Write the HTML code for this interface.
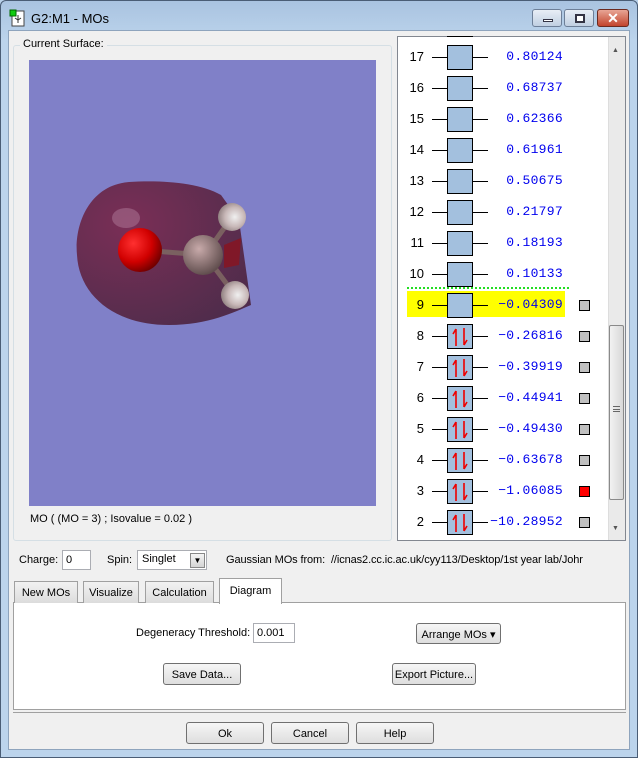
<!DOCTYPE html>
<html><head><meta charset="utf-8"><style>
*{margin:0;padding:0;box-sizing:border-box}
body{width:638px;height:758px;overflow:hidden;background:#b9d1ea;font-family:"Liberation Sans",sans-serif;font-size:11px;color:#000;position:relative}
.a{position:absolute;white-space:nowrap}
.frame{left:0;top:0;width:638px;height:758px;background:linear-gradient(#a9c3e0,#bcd4ec 40px,#bcd4ec);border:1px solid #4a5d75;border-radius:6px 6px 0 0}
.client{left:8px;top:30px;width:622px;height:720px;background:#f0f0f0;border:1px solid #8ea4bd}
.btn{position:absolute;white-space:nowrap;background:linear-gradient(#f6f6f6,#dedede);border:1px solid #707070;border-radius:3px;text-align:center;font-size:11px}
.num{position:absolute;width:20px;text-align:right;font-family:"Liberation Sans",sans-serif;font-size:13px}
.ln{position:absolute;height:1px;background:#000}
.box{position:absolute;width:26px;height:25px;background:#a3c0de;border:1px solid #000}
.en{position:absolute;right:75px;font-family:"Liberation Mono",monospace;font-size:13px;color:#0000ee;letter-spacing:0.3px}
.sq{position:absolute;left:579px;width:11px;height:11px;background:#c0c0c0;border:1px solid #000}
.tab{position:absolute;top:581px;height:22px;border:1px solid #a0a0a0;border-bottom:none;background:linear-gradient(#f2f2f2,#dcdcdc);font-size:11px;padding-top:5px;text-align:center}
</style></head><body>
<div class="a frame"></div>
<svg class="a" style="left:9px;top:9px" width="18" height="18"><rect x="3" y="2" width="12" height="15" fill="#fff" stroke="#444"/><rect x="1" y="1" width="6" height="6" fill="#1c1" stroke="#060"/><path d="M9 6v8M6 9l3 2 3-2" stroke="#333" fill="none"/></svg>
<div class="a" style="left:31px;top:11px;font-size:13px">G2:M1 - MOs</div>
<div class="a" style="left:532px;top:9px;width:30px;height:18px;border:1px solid #6d7f98;border-radius:3px;background:linear-gradient(#e8eef6,#c0cfe2)"><div class="a" style="left:10px;top:9px;width:10px;height:3px;background:#fff;border:1px solid #334"></div></div>
<div class="a" style="left:564px;top:9px;width:30px;height:18px;border:1px solid #6d7f98;border-radius:3px;background:linear-gradient(#e8eef6,#c0cfe2)"><div class="a" style="left:10px;top:4px;width:10px;height:9px;border:2px solid #334;background:#fff"></div></div>
<div class="a" style="left:597px;top:9px;width:32px;height:18px;border:1px solid #6b2a20;border-radius:3px;background:linear-gradient(#e8a595,#c2442d);color:#fff;font-weight:bold;font-size:14px;text-align:center;line-height:17px">✕</div>
<div class="a client"></div>

<div class="a" style="left:13px;top:45px;width:379px;height:496px;border:1px solid #d5dfe5;border-radius:3px"></div>
<div class="a" style="left:20px;top:38px;background:#f0f0f0;padding:0 3px;font-size:11px">Current Surface:</div>
<div class="a" style="left:29px;top:60px;width:347px;height:446px;background:#8080c8;overflow:hidden">
<svg width="347" height="446">
<defs>
<radialGradient id="lobe" cx="0.3" cy="0.3" r="0.8"><stop offset="0" stop-color="#7a2a50"/><stop offset="1" stop-color="#4e2845"/></radialGradient>
<radialGradient id="ox" cx="0.35" cy="0.35" r="0.7"><stop offset="0" stop-color="#ff3030"/><stop offset="0.6" stop-color="#d00000"/><stop offset="1" stop-color="#700000"/></radialGradient>
<radialGradient id="cb" cx="0.4" cy="0.35" r="0.7"><stop offset="0" stop-color="#c8aaaa"/><stop offset="1" stop-color="#5a4848"/></radialGradient>
<radialGradient id="hb" cx="0.6" cy="0.5" r="0.7"><stop offset="0" stop-color="#f0f0f0"/><stop offset="0.5" stop-color="#c8b8b8"/><stop offset="1" stop-color="#7a6a6a"/></radialGradient>
</defs>
<path d="M100 122 C60 125 45 165 48 195 C50 235 85 265 140 265 C180 265 205 252 222 245 L 210 160 L 192 135 C170 122 130 120 100 122Z" fill="url(#lobe)" opacity="0.95"/>
<ellipse cx="97" cy="158" rx="14" ry="10" fill="#b07a9a" opacity="0.5"/>
<line x1="111" y1="190" x2="176" y2="195" stroke="#7a6060" stroke-width="5"/>
<line x1="176" y1="195" x2="203" y2="157" stroke="#7a6060" stroke-width="5"/>
<line x1="176" y1="195" x2="206" y2="235" stroke="#7a6060" stroke-width="5"/>
<path d="M195 185 L212 178 L210 205 L195 208Z" fill="#801828"/>
<circle cx="111" cy="190" r="22" fill="url(#ox)"/>
<circle cx="174" cy="195" r="20" fill="url(#cb)"/>
<circle cx="203" cy="157" r="14" fill="url(#hb)"/>
<circle cx="206" cy="235" r="14" fill="url(#hb)"/>
</svg></div>
<div class="a" style="left:30px;top:513px;font-size:11px">MO ( (MO = 3) ; Isovalue = 0.02 )</div>

<div class="a" style="left:397px;top:36px;width:229px;height:505px;background:#fff;border:1px solid #828790;overflow:hidden">
<div class="a" style="left:210px;top:0;width:17px;height:503px;background:#eaeaea;border-left:1px solid #ddd"></div>
<div class="a" style="left:211px;top:288px;width:15px;height:175px;border:1px solid #8a8a8a;border-radius:2px;background:linear-gradient(90deg,#f2f2f2,#d8d8d8)"></div>
<div class="a" style="left:215px;top:369px;width:7px;height:6px;border-top:1px solid #666;border-bottom:1px solid #666"><div style="margin-top:2px;height:1px;background:#666"></div></div>
<div class="a" style="left:214px;top:10px;font-size:7px;color:#555">▲</div>
<div class="a" style="left:214px;top:488px;font-size:7px;color:#555">▼</div>
</div>
<div class="a" style="left:447px;top:36px;width:26px;height:1px;background:#000"></div>
<div class="a" style="left:407px;top:287px;width:162px;height:0;border-top:2px dotted #22dd22"></div>
<div class="a" style="left:407px;top:291px;width:158px;height:26px;background:#ffff00"></div>

<div id="rows"></div>
<script>
var d=[["17","0.80124"],["16","0.68737"],["15","0.62366"],["14","0.61961"],["13","0.50675"],["12","0.21797"],["11","0.18193"],["10","0.10133"],["9","\u22120.04309"],["8","\u22120.26816"],["7","\u22120.39919"],["6","\u22120.44941"],["5","\u22120.49430"],["4","\u22120.63678"],["3","\u22121.06085"],["2","\u221210.28952"]];
var h="";
d.forEach(function(r,i){var c=57+i*31;var occ=i>=9;
h+='<div class="num" style="left:404px;top:'+(c-8)+'px">'+r[0]+'</div>';
h+='<div class="ln" style="left:432px;width:16px;top:'+c+'px"></div>';
h+='<div class="ln" style="left:472px;width:16px;top:'+c+'px"></div>';
h+='<div class="box" style="left:447px;top:'+(c-12)+'px">'+(occ?'<svg width="24" height="23" style="position:absolute;left:0;top:0"><path d="M8 21V4M5 9L8 4" stroke="#e00" stroke-width="1.6" fill="none"/><path d="M16 3V20M16 20L19 15" stroke="#e00" stroke-width="1.6" fill="none"/></svg>':'')+'</div>';
h+='<div class="en" style="top:'+(c-8)+'px">'+r[1]+'</div>';
if(i>=8)h+='<div class="sq" style="top:'+(c-5)+'px;'+(r[0]=="3"?'background:#f00':'')+'"></div>';
});
document.getElementById("rows").innerHTML=h;
</script>

<div class="a" style="left:19px;top:554px">Charge:</div>
<div class="a" style="left:62px;top:550px;width:29px;height:20px;background:#fff;border:1px solid #abadb3;padding:3px 3px">0</div>
<div class="a" style="left:107px;top:554px">Spin:</div>
<div class="a" style="left:137px;top:550px;width:70px;height:20px;background:#fff;border:1px solid #abadb3;padding:2px 4px">Singlet</div>
<div class="a" style="left:190px;top:553px;width:15px;height:15px;border:1px solid #888;background:linear-gradient(#f4f4f4,#d4d4d4);font-size:8px;text-align:center;line-height:14px">▼</div>
<div class="a" style="left:226px;top:554px;font-size:11px;letter-spacing:-0.1px">Gaussian MOs from:&nbsp; //icnas2.cc.ic.ac.uk/cyy113/Desktop/1st year lab/Johr</div>

<div class="a" style="left:13px;top:602px;width:613px;height:108px;background:#fff;border:1px solid #a0a0a0"></div>
<div class="tab" style="left:14px;width:64px">New MOs</div>
<div class="tab" style="left:83px;width:56px">Visualize</div>
<div class="tab" style="left:145px;width:69px">Calculation</div>
<div class="a" style="left:219px;top:578px;width:63px;height:26px;background:#fff;border:1px solid #a0a0a0;border-bottom:none;text-align:center;padding-top:6px">Diagram</div>
<div class="a" style="left:136px;top:627px">Degeneracy Threshold:</div>
<div class="a" style="left:253px;top:623px;width:42px;height:20px;background:#fff;border:1px solid #abadb3;padding:3px 3px">0.001</div>
<div class="btn" style="left:416px;top:623px;width:85px;height:21px;padding-top:4px">Arrange MOs ▾</div>
<div class="btn" style="left:163px;top:663px;width:78px;height:22px;padding-top:5px">Save Data...</div>
<div class="btn" style="left:392px;top:663px;width:84px;height:22px;padding-top:5px">Export Picture...</div>
<div class="a" style="left:13px;top:712px;width:613px;height:1px;background:#a0a0a0"></div>
<div class="btn" style="left:186px;top:722px;width:78px;height:22px;padding-top:5px">Ok</div>
<div class="btn" style="left:271px;top:722px;width:78px;height:22px;padding-top:5px">Cancel</div>
<div class="btn" style="left:356px;top:722px;width:78px;height:22px;padding-top:5px">Help</div>
</body></html>
